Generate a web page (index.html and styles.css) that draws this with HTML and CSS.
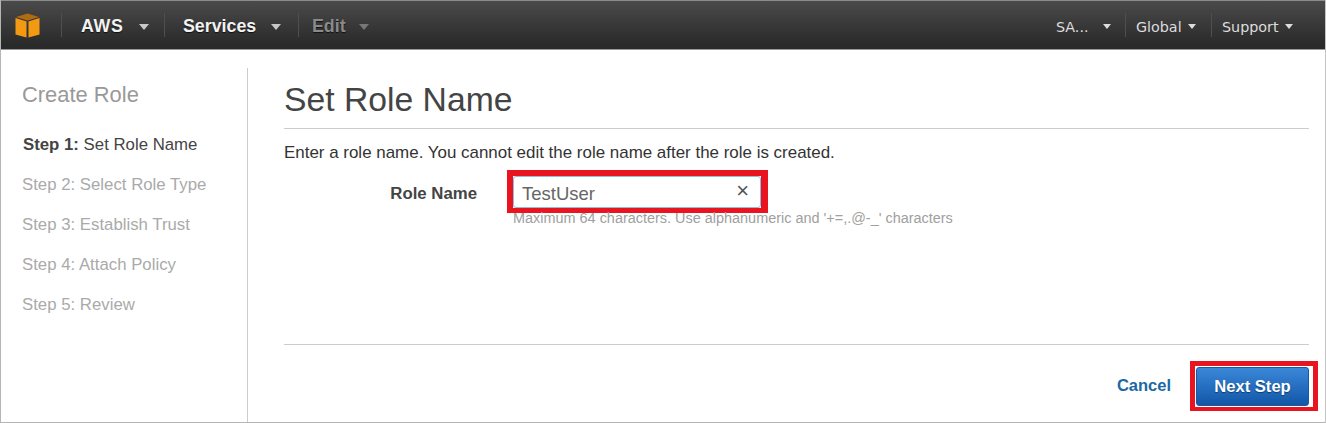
FILE: index.html
```html
<!DOCTYPE html>
<html lang="en">
<head>
<meta charset="utf-8">
<title>Set Role Name</title>
<link rel="stylesheet" href="styles.css">
</head>
<body>
<div class="frame">
  <header class="nav">
    <div class="logo-cell">
      <svg class="logo" width="25" height="25" viewBox="0 0 25 25">
        <path d="M12.500 0.500 L24 4 L12.500 7.500 L1 4 Z" fill="#b06c10"/>
        <path d="M0.500 5 L11.500 8.500 V24.500 L0.500 21.500 Z" fill="#f39a12"/>
        <path d="M24.500 5 L13.500 8.500 V24.500 L24.500 21.500 Z" fill="#f39a12"/>
      </svg>
    </div>
    <div class="nav-item bold w-aws"><span>AWS</span><i class="caret"></i></div>
    <div class="nav-item bold w-services"><span>Services</span><i class="caret"></i></div>
    <div class="nav-item bold dim"><span>Edit</span><i class="caret"></i></div>
    <div class="nav-right">
      <div class="nav-item small no-sep w-sa"><span>SA...</span><i class="caret sm"></i></div>
      <div class="nav-item small w-global"><span>Global</span><i class="caret sm"></i></div>
      <div class="nav-item small w-support"><span>Support</span><i class="caret sm"></i></div>
    </div>
  </header>
  <div class="body">
    <aside class="side">
      <h2 class="side-title">Create Role</h2>
      <ol class="steps">
        <li class="active"><b>Step 1:</b> Set Role Name</li>
        <li>Step 2: Select Role Type</li>
        <li>Step 3: Establish Trust</li>
        <li>Step 4: Attach Policy</li>
        <li>Step 5: Review</li>
      </ol>
    </aside>
    <main class="main">
      <h1 class="title">Set Role Name</h1>
      <p class="intro">Enter a role name. You cannot edit the role name after the role is created.</p>
      <div class="field">
        <label class="label">Role Name</label>
        <div class="control">
          <div class="hl input-hl">
            <div class="input"><span class="value">TestUser</span><span class="clear">×</span></div>
          </div>
          <div class="hint">Maximum 64 characters. Use alphanumeric and '+=,.@-_' characters</div>
        </div>
      </div>
      <div class="footer">
        <a class="cancel">Cancel</a>
        <div class="hl btn-hl"><button class="next">Next Step</button></div>
      </div>
    </main>
  </div>
</div>
</body>
</html>
```
FILE: styles.css
```css
html, body { margin: 0; padding: 0; background: #fff; }
body { width: 1326px; height: 423px; overflow: hidden; font-family: "Liberation Sans", Arial, sans-serif; }
.frame { width: 1326px; height: 423px; box-sizing: border-box; border-left: 1px solid #b5b5b5; border-right: 1px solid #c4c4c4; border-bottom: 1px solid #b5b5b5; display: flex; flex-direction: column; }
.nav { height: 50px; flex: none; box-sizing: border-box; border-top: 1px solid #8c8c8c; border-bottom: 1px solid #999; background: linear-gradient(#4a4a4a, #2a2a2a 90%); display: flex; align-items: center; color: #f2f2f2; }
.logo-cell { width: 60px; display: flex; padding-left: 14px; box-sizing: border-box; }
.nav-item { display: flex; align-items: center; height: 24px; border-left: 1px solid #4f4f4f; box-sizing: border-box; }
.nav-item span { margin-top: 2px; }
.nav-item.no-sep { border-left: 0; }
.bold { font-weight: bold; font-size: 17.800px; padding-left: 18px; text-shadow: 0 1px 1px #111; }
.w-aws { width: 103px; padding-left: 19px; }
.w-aws span { letter-spacing: 0.700px; }
.w-services { width: 134px; }
.dim { color: #8a8a8a; padding-left: 13px; }
.small { padding-left: 10px; color: #ddd; font-family: "DejaVu Sans", Verdana, sans-serif; font-size: 14.300px; }
.small span { margin-top: 4px; }
.no-sep.small { padding-left: 0; }
.nav-right { margin-left: auto; display: flex; margin-right: 19px; }
.w-sa { width: 69px; }
.w-global { width: 86px; }
.w-support { width: 95px; }
.caret { display: block; width: 0; height: 0; border: 5px solid transparent; border-top: 6px solid #c8c8c8; border-bottom: 0; margin-left: 15px; margin-top: 4px; }
.caret.sm { margin-left: 6px; border-top-color: #ddd; border-width: 5px 4.500px 0; margin-top: 3px; }
.w-sa .caret.sm { margin-left: 14px; }
.dim .caret { border-top-color: #777; margin-left: 13px; }
.body { flex: 1; display: flex; min-height: 0; }
.side { width: 247px; flex: none; box-sizing: border-box; margin-top: 18px; border-right: 1px solid #ccc; padding-left: 21px; }
.side-title { margin: 14px 0 0; font-size: 21.900px; line-height: 26px; font-weight: normal; color: #999; }
.steps { list-style: none; margin: 27px 0 0; padding: 0; font-size: 16.800px; color: #aaa; }
.steps li { height: 40px; line-height: 20px; }
.steps li.active { color: #444; padding-left: 1px; }
.main { flex: 1; min-width: 0; margin: 0 16px 0 36px; display: flex; flex-direction: column; }
.title { margin: 29px 0 0; height: 50px; box-sizing: border-box; border-bottom: 1px solid #ccc; font-size: 33.700px; line-height: 40px; font-weight: normal; color: #444; }
.intro { margin: 14px 0 0; font-size: 16.940px; line-height: 20px; color: #333; }
.field { display: flex; margin-top: 7px; height: 74px; flex: none; }
.label { width: 193px; text-align: right; font-weight: bold; font-size: 16.800px; color: #444; line-height: 20px; margin-top: 14px; }
.control { margin-left: 30px; }
.hl { border: 0 solid #e8141f; box-sizing: border-box; background: #fff; }
.input-hl { width: 261px; height: 43px; border-width: 6px 7px 5px 6px; }
.input { height: 32px; box-sizing: border-box; border: 1px solid #8fbce6; border-radius: 3px; display: flex; justify-content: space-between; align-items: center; padding: 0 11px 0 8px; font-size: 18.500px; color: #666; }
.value { margin-top: 4px; }
.clear { font-size: 22px; color: #555; line-height: 20px; margin-top: -3px; }
.hint { font-size: 14.450px; line-height: 16px; color: #a0a0a0; margin: -3px 0 0 6px; white-space: nowrap; }
.footer { margin-top: 100px; display: flex; justify-content: flex-end; align-items: center; margin-right: -9px; padding-top: 17px; position: relative; }
.footer::before { content: ""; position: absolute; top: 0; left: 0; right: 9px; height: 1px; background: #ccc; }
.cancel { font-weight: bold; font-size: 16.500px; color: #1c68a4; margin-right: 19px; margin-bottom: 2px; }
.btn-hl { width: 128px; height: 50px; border-width: 5px 5px 4px; }
.next { display: block; width: 113px; height: 39px; margin: 1px 0 0 1px; border: 1px solid #1a5a9c; border-radius: 3px; background: linear-gradient(#3a87d8, #1257a8); color: #fff; font-family: inherit; font-weight: bold; font-size: 16.600px; text-shadow: 0 1px 1px #0b3d70; padding: 0; }
```
